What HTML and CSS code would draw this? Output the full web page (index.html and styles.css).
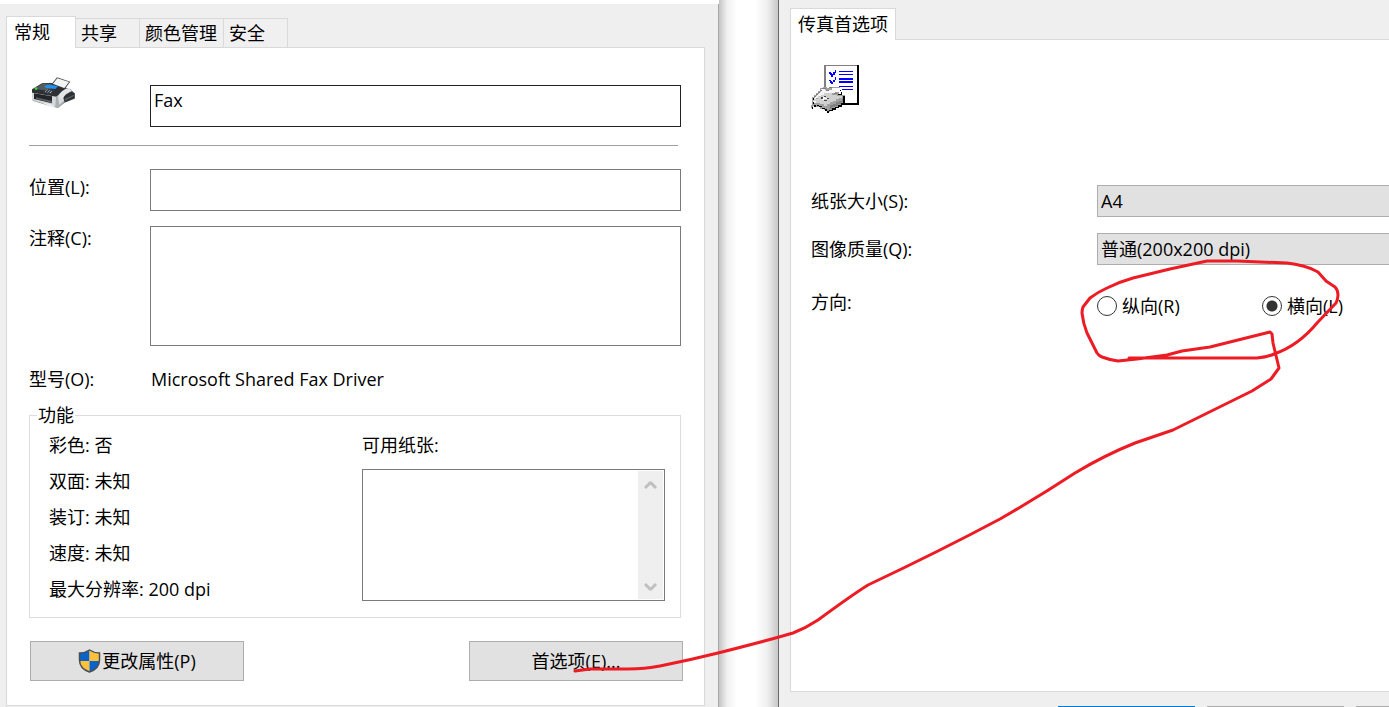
FILE: index.html
```html
<!DOCTYPE html>
<html lang="zh-CN">
<head>
    <meta charset="UTF-8">
    <meta name="viewport" content="width=device-width, initial-scale=1.0">
    <title>Fax 属性</title>
    <link rel="stylesheet" href="styles.css">
</head>
<body>

    <div class="desktop">
        <!-- 打印机属性 -->
        <section class="dialog dialog-props">
            <div class="tabs">
                <button class="tab active" type="button">常规</button>
                <button class="tab" type="button">共享</button>
                <button class="tab" type="button">颜色管理</button>
                <button class="tab" type="button">安全</button>
            </div>
            <form class="panel props">
                <div class="row name-row">
                    <label for="name" aria-label="名称">
                        <svg class="printer" viewBox="3 3 135 96">
                            <path d="M8 42L36 23L62 20L122 40L134 52L134 68L104 80L84 95L68 92L8 74Z" fill="#6a6e72"/>
                            <path d="M60 30L81 4L121 17L98 48Z" fill="#4a4e52"/>
                            <path d="M64 30L82 7L117 18L96 45Z" fill="#f3f4f5"/>
                            <path d="M6 40L36 22L62 21L112 40L78 62L6 50Z" fill="#2d3135"/>
                            <path d="M12 38L36 24L60 23L74 29L52 44Z" fill="#555a5f"/>
                            <path d="M42 31L54 26L84 30L76 39L48 36Z" fill="#1e90f0"/>
                            <path d="M40 50L54 38L72 42L60 55Z" fill="#3a3f44"/>
                            <path d="M46 47L52 41M53 49L59 43M60 51L66 45" stroke="#d4d8dc" stroke-width="3" stroke-dasharray="4 2"/>
                            <circle cx="18" cy="38" r="4" fill="#38d83c"/>
                            <path d="M6 50L78 62V92L66 90L6 73Z" fill="#d5d8da"/>
                            <path d="M12 52L66 61V82L12 69Z" fill="#22262a"/>
                            <path d="M18 64L66 75V80L18 69Z" fill="#5c6166"/>
                            <path d="M78 62L98 48L106 76L88 94L76 93Z" fill="#a9aeb2"/>
                            <path d="M84 64L98 54L103 73L88 86Z" fill="#d9dcde"/>
                            <path d="M84 62Q92 42 116 36L126 44L106 56L98 68Z" fill="#e3e5e7"/>
                            <path d="M100 66Q106 54 124 47L134 52L134 67L104 79Z" fill="#2d3135"/>
                            <path d="M104 68L132 56V60L105 74Z" fill="#555a5f"/>
                            <path d="M36 80L60 84L76 91L66 94Z" fill="#eef0f1"/>
                        </svg>
                    </label>
                    <input class="field strong" type="text" id="name" value="Fax">
                </div>
                <hr class="divider">
                <div class="row location-row">
                    <label for="location">位置(L):</label>
                    <input class="field" type="text" id="location">
                </div>
                <div class="row comment-row">
                    <label for="comment">注释(C):</label>
                    <textarea class="field comment" id="comment"></textarea>
                </div>
                <div class="row model-row">
                    <span>型号(O):</span>
                    <span class="model">Microsoft Shared Fax Driver</span>
                </div>
                <fieldset class="features">
                    <legend>功能</legend>
                    <ul class="feature-list">
                        <li>彩色: 否</li>
                        <li>双面: 未知</li>
                        <li>装订: 未知</li>
                        <li>速度: 未知</li>
                        <li>最大分辨率: 200 dpi</li>
                    </ul>
                    <div class="paper">
                        <label for="paper">可用纸张:</label>
                        <div class="listbox">
                            <select id="paper" multiple></select>
                            <div class="scrollbar">
                                <svg viewBox="0 0 13 9"><path d="M1 7L6 2H7L12 7"/></svg>
                                <svg viewBox="0 0 13 9"><path d="M1 2L6 7H7L12 2"/></svg>
                            </div>
                        </div>
                    </div>
                </fieldset>
                <div class="actions">
                    <button class="btn" type="button">
                        <svg class="shield" viewBox="0 0 22 24">
                            <path d="M11 1C8 3 5 4 1 4V11C1 17 5 21 11 23V12Z" fill="#ffc03a"/>
                            <path d="M11 1C8 3 5 4 1 4V12H11Z" fill="#0b62c8"/>
                            <path d="M11 1C14 3 17 4 21 4V12H11Z" fill="#ffc03a"/>
                            <path d="M21 12C20 17 17 21 11 23V12Z" fill="#0b62c8"/>
                            <path d="M11 1C8 3 5 4 1 4V11C1 17 5 21 11 23C17 21 21 17 21 11V4C17 4 14 3 11 1Z" fill="none" stroke="#4a4f57" stroke-width="1.5"/>
                        </svg>更改属性(P)
                    </button>
                    <button class="btn" type="button">首选项(E)...</button>
                </div>
            </form>
        </section>

        <div class="gap"></div>

        <!-- 传真首选项 -->
        <section class="dialog dialog-fax">
            <div class="tabs">
                <button class="tab active" type="button">传真首选项</button>
            </div>
            <form class="panel prefs">
                <svg class="fax" viewBox="63 45 144 144" shape-rendering="crispEdges">
                    <path d="M102 45H207V165H102Z" fill="#000"/>
                    <path d="M102 45H201V160H102Z" fill="#808080"/>
                    <path d="M107 49H201V160H107Z" fill="#fff"/>
                    <path d="M147 63h42v3h-42zM147 72h42v3h-42zM147 84h42v5h-42zM147 93h42v5h-42zM147 107h42v3h-42zM147 117h42v3h-42z" fill="#00f"/>
                    <path d="M117 66h5v4h4v3h4v-6h4v-6h4v7h-4v6h-4v6h-6v-4h-4v-4h-3zM117 90h5v4h4v3h4v-6h4v-9h4v8h-4v6h-4v6h-6v-4h-4v-4h-3z" fill="#00f"/>
                    <path d="M90 114h9v-3h12v3h12v-3h27v6h6v18h8v27h-9v5h-9v4h-9v5h-9v4h-9v5h-9v-5h-9v-4h-12v-5h-12v-4h-9v6h-6v-9h3v-24h6v-6h6v-6h6v-6h8z" fill="#a0a0a0"/>
                    <path d="M93 117h12v3h36v5h-6v5h-12v4h-18v5h-12v5h-15v14h-9v-15h6v-6h6v-6h6v-6h6z" fill="#f4f4f4"/>
                    <path d="M84 139h9v-5h9v-5h24v5h15v4h15v5h-9v5h-9v5h-9v4h-9v5h-9v5h-9v-4h-12v-5h-12v-5h-9v-5h15z" fill="#d0d0d0"/>
                    <path d="M120 166h9v-5h9v-4h9v-5h9v-5h6v10h-9v5h-9v5h-9v4h-9v5h-6z" fill="#808080"/>
                    <path d="M126 113h23v4h6v15h-9v-6h-8v-5h-12z" fill="#fff"/>
                    <path d="M149 120h5v4h-5zM152 126h4v8h-4zM144 132h8v4h-8zM69 144h4v5h-4zM69 157h4v5h-4zM66 170h4v8h-4zM72 165h5v5h-5z" fill="#000"/>
                    <path d="M78 132h6v4h-6zM84 126h6v4h-6zM90 120h6v4h-6zM96 114h12v3h-12zM108 120h9v3h-9zM117 111h9v4h-9zM73 138h5v4h-5zM132 128h9v4h-9z" fill="#808080"/>
                    <path d="M93 142h6v4h-6zM102 138h5v4h-5zM102 149h8v4h-8zM112 144h5v4h-5z" fill="#444"/>
                    <path d="M99 142h5v4h-5zM105 144h6v4h-6zM96 147h6v4h-6z" fill="#fff"/>
                    <path d="M80 164h6v4h-6zM86 168h9v4h-9zM95 173h10v4h-10zM105 178h6v6h-6zM110 183h8v5h-8zM118 179h10v5h-10zM127 175h10v5h-10zM136 170h10v5h-10zM145 166h10v5h-10zM154 160h9v6h-9zM160 138h4v24h-4z" fill="#000"/>
                </svg>
                <div class="pref-row">
                    <label for="size">纸张大小(S):</label>
                    <select class="combo" id="size"><option>A4</option></select>
                </div>
                <div class="pref-row">
                    <label for="quality">图像质量(Q):</label>
                    <select class="combo" id="quality"><option>普通(200x200 dpi)</option></select>
                </div>
                <div class="pref-row orientation">
                    <span>方向:</span>
                    <div class="radios">
                        <label><input type="radio" name="orient">纵向(R)</label>
                        <label><input type="radio" name="orient" checked>横向(L)</label>
                    </div>
                </div>
            </form>
            <div class="footer">
                <button class="btn primary" type="button" aria-label="确定"></button>
                <button class="btn" type="button" aria-label="取消"></button>
                <button class="btn" type="button" aria-label="应用"></button>
            </div>
        </section>
    </div>

    <!-- 红笔标注 -->
    <svg class="pen" viewBox="0 0 1389 707" preserveAspectRatio="none">
        <path d="M1129 358H1257Q1267 357 1274 354Q1286 350 1297 342Q1308 334 1317 323L1336 303Q1338 299 1338 295Q1338 290 1335 287L1326 281L1318 272Q1311 268 1303 266Q1295 264 1287 263L1237 261H1207L1170 269L1133 278Q1119 282 1107 288Q1098 292 1090 298L1083 307Q1082 310 1082 313Q1083 323 1087 333L1097 353Q1099 356 1102 357Q1110 360 1118 361L1137 359L1167 355L1182 351L1210 347L1270 332L1272 334L1273 343L1279 368L1271 379L1252 391L1173 430L1135 443Q1105 455 1075 473Q1040 496 1000 519Q940 551 868 585Q852 595 818 620Q806 628 793 633Q777 638 718 653Q690 660 660 666Q645 669 628 669H590L575 671"/>
    </svg>

</body>
</html>
```
FILE: styles.css
```css
* {
    box-sizing: border-box;
}

body {
    margin: 0;
    height: 100vh;
    overflow: hidden;
    background-color: #fff;
    color: #000;
    font-family: "Open Sans", "Noto Sans CJK SC", sans-serif;
    font-size: 18px;
    line-height: 24px;
}

button, input, select, textarea {
    font: inherit;
    color: inherit;
    border-radius: 0;
    margin: 0;
}

.desktop {
    display: grid;
    grid-template-columns: 719fr 59fr 611fr;
    grid-template-rows: 100%;
    height: 100%;
}

.dialog {
    background-color: #efefef;
    min-width: 0;
    overflow: hidden;
}

.dialog-props {
    margin-top: 4px;
    padding: 12px 13px 0 6px;
    border-right: 1px solid #a6a6a6;
}

/* 两个窗口之间的阴影 */
.gap {
    background: linear-gradient(to right, #c4c4c4, #f0f0f0 8px, #fff 18px, #fff 36px, #f0f0f0 48px, #c8c8c8);
}

/* 第二个窗口的右侧被屏幕截断 */
.dialog-fax {
    display: flex;
    flex-direction: column;
    padding: 8px 0 0 11px;
    border-left: 1px solid #6a6a6a;
}

.tabs {
    display: flex;
    align-items: flex-end;
}

.tab {
    height: 29px;
    padding: 0 6px 0 5px;
    border: 1px solid #d9d9d9;
    border-width: 1px 1px 0 0;
    background-color: #f0f0f0;
    min-width: 64px;
    text-align: left;
    line-height: 28px;
}

.tab.active {
    position: relative;
    height: 32px;
    min-width: 70px;
    margin-bottom: -1px;
    padding: 0 7px 2px;
    border-left-width: 1px;
    background-color: #fff;
}

.panel {
    background-color: #fff;
    border: 1px solid #d9d9d9;
}

.props {
    padding: 29px 21px 24px 22px;
}

.row {
    display: grid;
    grid-template-columns: 121px 1fr;
    padding-right: 2px;
}

.field {
    width: 100%;
    height: 42px;
    padding: 0 3px 12px;
    border: 1px solid #7a7a7a;
    background-color: #fff;
    outline: none;
    resize: none;
}

.strong {
    margin-top: 8px;
    border-color: #222;
}

.printer {
    display: block;
    width: 45px;
    height: 32px;
    margin-left: 2px;
}

.divider {
    height: 1px;
    margin: 18px 5px 23px 0;
    border: 0;
    background-color: #a0a0a0;
}

.location-row label {
    padding-top: 6px;
}

.comment-row {
    margin-top: 15px;
}

.comment {
    height: 120px;
}

.model-row {
    margin-top: 21px;
}

.model {
    padding-left: 1px;
}

.features {
    display: grid;
    grid-template-columns: 313fr 303fr;
    margin: 12px 2px 0 0;
    padding: 0 15px 10px 19px;
    border: 1px solid #dcdcdc;
}

.features legend {
    margin-left: -12px;
    padding: 0 1px;
}

.feature-list {
    margin: 0;
    padding: 0;
    list-style: none;
    line-height: 36px;
}

.paper {
    padding-top: 6px;
}

.paper label {
    display: block;
    margin-bottom: 12px;
}

.listbox {
    display: flex;
    height: 132px;
    padding: 1px;
    border: 1px solid #7a7a7a;
}

.listbox select {
    flex: 1;
    min-width: 0;
    border: 0;
    background-color: #fff;
    overflow: hidden;
    outline: none;
}

.scrollbar {
    display: flex;
    flex-direction: column;
    justify-content: space-between;
    align-items: center;
    width: 25px;
    padding: 10px 0 8px;
    background-color: #efefef;
}

.scrollbar svg {
    width: 13px;
    height: 9px;
    fill: none;
    stroke: #bfbfbf;
    stroke-width: 3;
}

.actions {
    display: flex;
    justify-content: space-between;
    margin-top: 23px;
    padding-left: 1px;
}

.btn {
    display: flex;
    justify-content: center;
    align-items: center;
    width: 214px;
    height: 40px;
    padding: 0;
    border: 1px solid #adadad;
    background-color: #e1e1e1;
}

.shield {
    width: 23px;
    height: 24px;
    margin-right: 1px;
}

.prefs {
    flex: 1;
    padding: 25px 0 0 20px;
    border-right: 0;
}

.fax {
    display: block;
    width: 48px;
    height: 48px;
    margin-bottom: 72px;
}

.pref-row {
    display: grid;
    grid-template-columns: 286px 1fr;
    align-items: center;
    margin-bottom: 16px;
}

.combo {
    appearance: none;
    height: 32px;
    padding: 0 3px;
    border: 1px solid #adadad;
    border-right: 0;
    background-color: #e1e1e1;
}

.orientation {
    align-items: start;
    margin-top: 25px;
}

.radios {
    display: flex;
    padding-top: 4px;
}

.radios label {
    display: flex;
    align-items: center;
    gap: 5px;
    width: 165px;
    white-space: nowrap;
}

.radios label:last-child {
    width: auto;
}

.radios input {
    appearance: none;
    width: 20px;
    height: 20px;
    border: 1px solid #333;
    border-radius: 50%;
    background-color: #fff;
}

.radios input:checked {
    background-image: radial-gradient(circle, #333 5px, transparent 6px);
}

.footer {
    display: flex;
    gap: 12px;
    height: 15px;
    padding: 14px 0 0 268px;
    overflow: hidden;
}

.footer .btn {
    width: 137px;
    flex-shrink: 0;
}

.footer .primary {
    border: 2px solid #0078d7;
}

.pen {
    position: absolute;
    inset: 0;
    width: 100%;
    height: 100%;
    fill: none;
    stroke: #ed1c24;
    stroke-width: 3;
    stroke-linecap: round;
    stroke-linejoin: round;
    pointer-events: none;
}
```
